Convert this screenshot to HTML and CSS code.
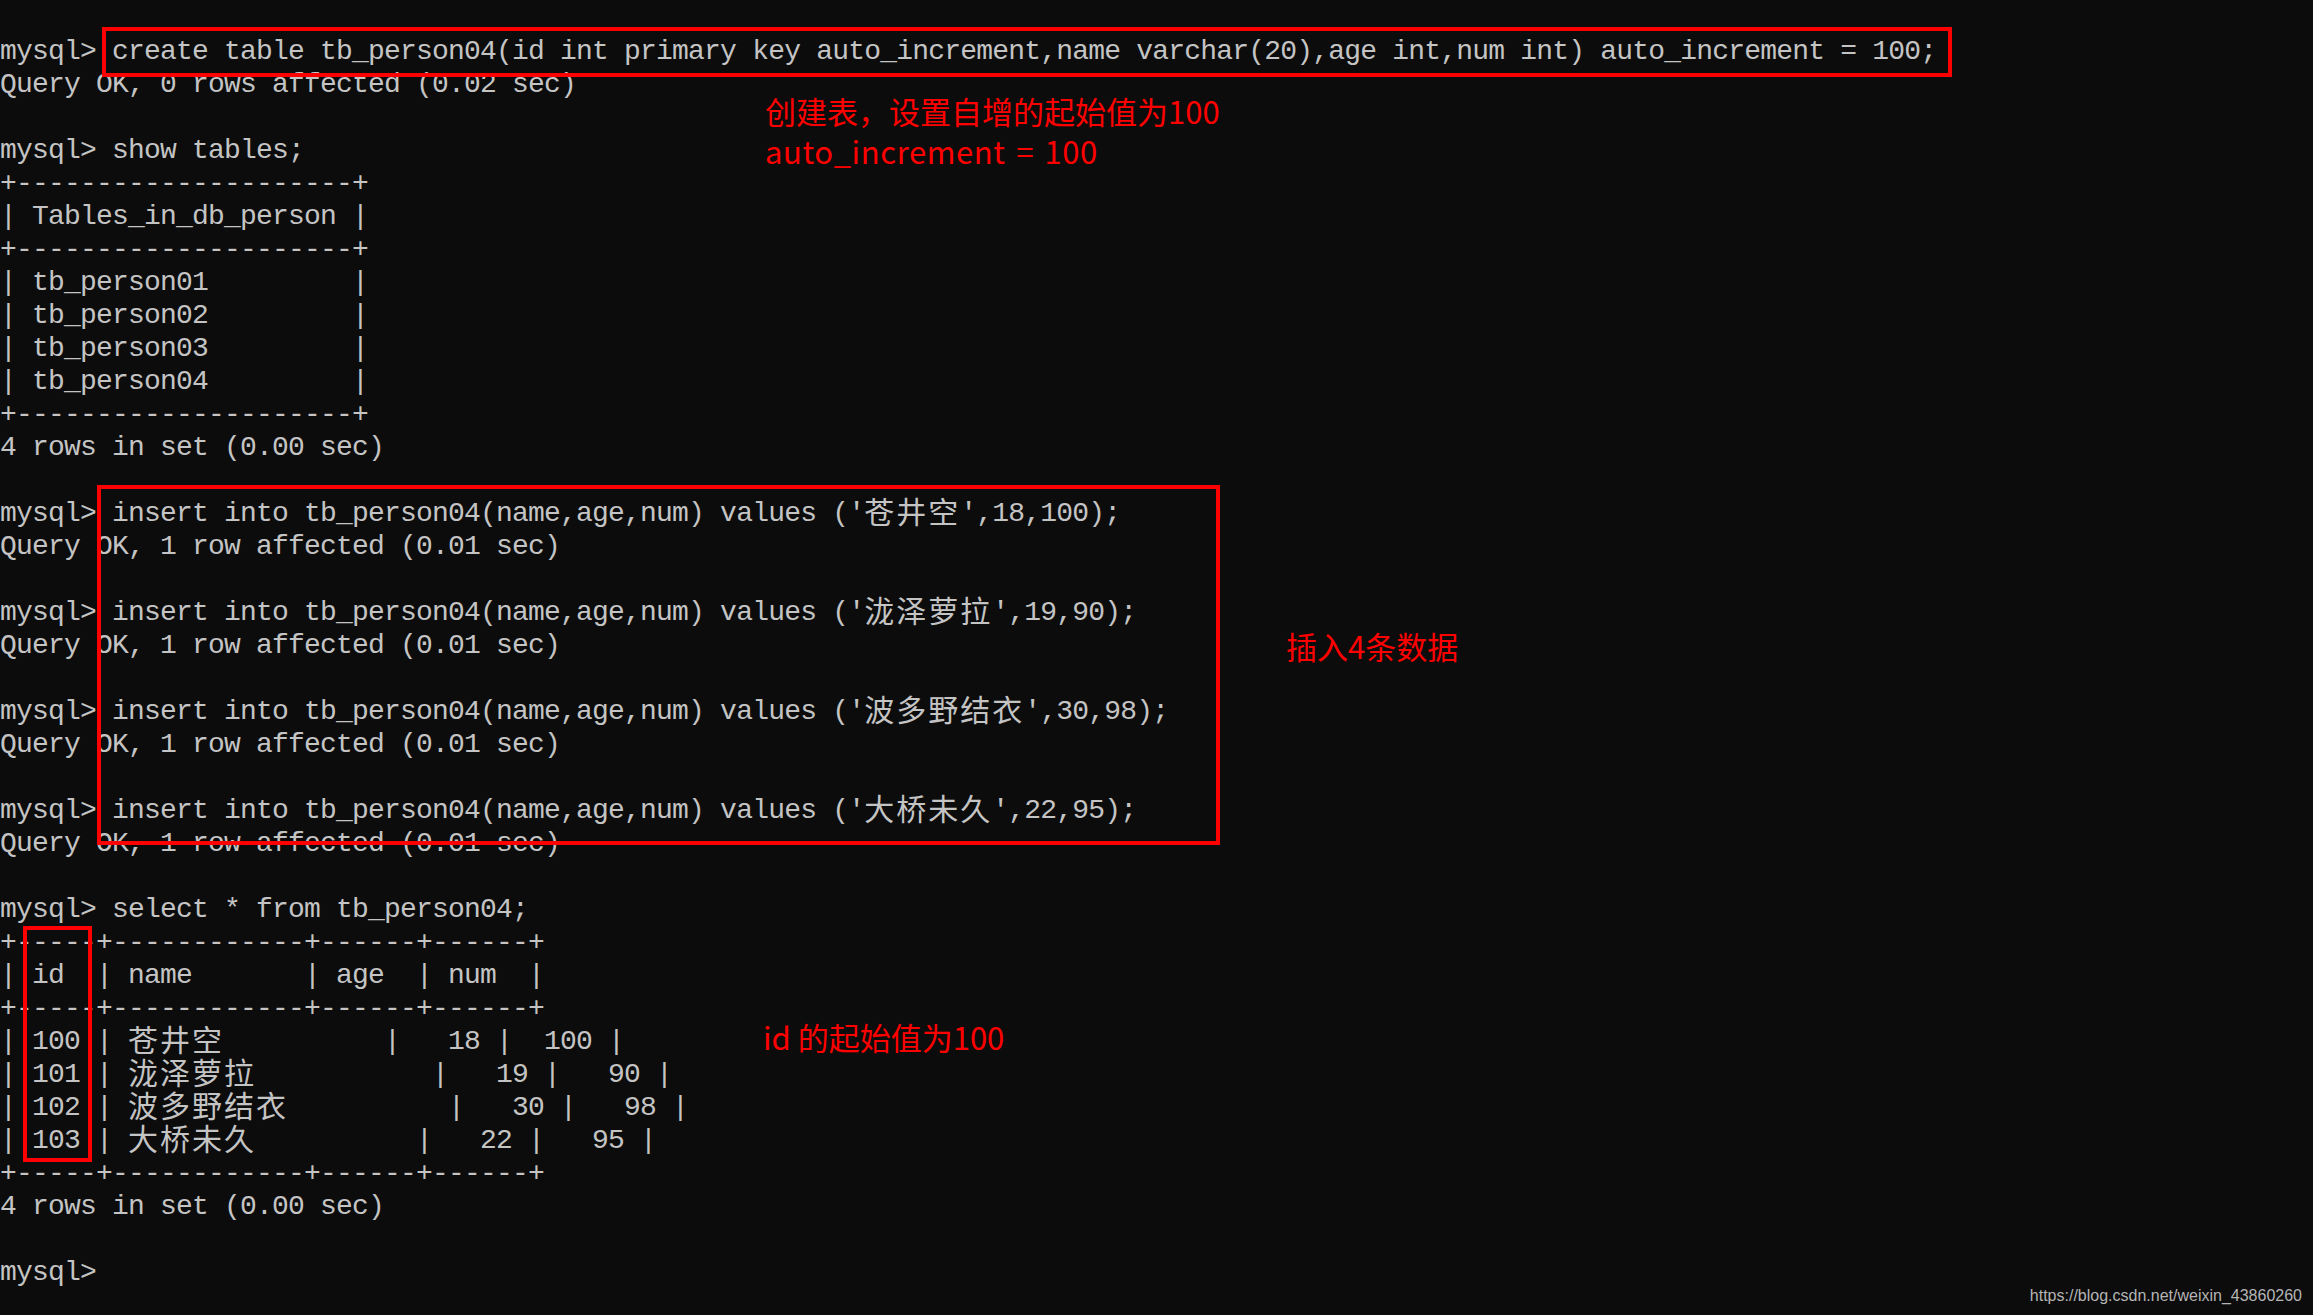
FILE: index.html
```html
<!DOCTYPE html>
<html lang="zh-CN">
<head>
    <meta charset="UTF-8">
    <meta name="viewport" content="width=device-width, initial-scale=1.0">
    <link rel="stylesheet" href="styles.css">
    <title>mysql auto_increment</title>
</head>
<body>
    <div class="screen">
        <div class="log">
            <div class="ln">mysql&gt; create table tb_person04(id int primary key auto_increment,name varchar(20),age int,num int) auto_increment = 100;</div>
            <div class="ln">Query OK, 0 rows affected (0.02 sec)</div>
            <div class="ln"></div>
            <div class="ln">mysql&gt; show tables;</div>
            <div class="ln">+---------------------+</div>
            <div class="ln">| Tables_in_db_person |</div>
            <div class="ln">+---------------------+</div>
            <div class="ln">| tb_person01         |</div>
            <div class="ln">| tb_person02         |</div>
            <div class="ln">| tb_person03         |</div>
            <div class="ln">| tb_person04         |</div>
            <div class="ln">+---------------------+</div>
            <div class="ln">4 rows in set (0.00 sec)</div>
            <div class="ln"></div>
            <div class="ln">mysql&gt; insert into tb_person04(name,age,num) values ('<span class="cj">苍井空</span>',18,100);</div>
            <div class="ln">Query OK, 1 row affected (0.01 sec)</div>
            <div class="ln"></div>
            <div class="ln">mysql&gt; insert into tb_person04(name,age,num) values ('<span class="cj">泷泽萝拉</span>',19,90);</div>
            <div class="ln">Query OK, 1 row affected (0.01 sec)</div>
            <div class="ln"></div>
            <div class="ln">mysql&gt; insert into tb_person04(name,age,num) values ('<span class="cj">波多野结衣</span>',30,98);</div>
            <div class="ln">Query OK, 1 row affected (0.01 sec)</div>
            <div class="ln"></div>
            <div class="ln">mysql&gt; insert into tb_person04(name,age,num) values ('<span class="cj">大桥未久</span>',22,95);</div>
            <div class="ln">Query OK, 1 row affected (0.01 sec)</div>
            <div class="ln"></div>
            <div class="ln">mysql&gt; select * from tb_person04;</div>
            <div class="ln">+-----+------------+------+------+</div>
            <div class="ln">| id  | name       | age  | num  |</div>
            <div class="ln">+-----+------------+------+------+</div>
            <div class="ln">| 100 | <span class="cj">苍井空</span>          |   18 |  100 |</div>
            <div class="ln">| 101 | <span class="cj">泷泽萝拉</span>           |   19 |   90 |</div>
            <div class="ln">| 102 | <span class="cj">波多野结衣</span>          |   30 |   98 |</div>
            <div class="ln">| 103 | <span class="cj">大桥未久</span>          |   22 |   95 |</div>
            <div class="ln">+-----+------------+------+------+</div>
            <div class="ln">4 rows in set (0.00 sec)</div>
            <div class="ln"></div>
            <div class="ln">mysql&gt;</div>
        </div>

        <!-- red marks drawn over the console -->
        <div class="mark mark-create"></div>
        <div class="mark mark-insert"></div>
        <div class="mark mark-id"></div>

        <p class="note note-create">创建表，设置自增的起始值为100</p>
        <p class="note note-auto">auto_increment = 100</p>
        <p class="note note-insert">插入4条数据</p>
        <p class="note note-id">id 的起始值为100</p>

        <div class="wm">https://blog.csdn.net/weixin_43860260</div>
    </div>
</body>
</html>
```

FILE: styles.css
```css
body{
    margin: 0;
    background-color: #0c0c0c;
    overflow: hidden;
}
.screen{
    position: relative;
    width: 2313px;
    height: 1315px;
}

/* console text, one cell = 16px */
.log{
    padding-top: 35px;
    color: #c4c4c4;
    font-family: "Liberation Mono", "DejaVu Sans Mono", monospace;
    font-size: 28px;
    letter-spacing: -0.8px;
}
.ln{
    height: 33px;
    line-height: 33px;
    white-space: pre;
}
.cj{
    font-family: "Noto Sans CJK SC", sans-serif;
    font-size: 30px;
    letter-spacing: 2px;
    line-height: 0;
    vertical-align: -2px;
}

/* red boxes */
.mark{
    position: absolute;
    box-sizing: border-box;
    border: 4px solid #ff0000;
}
.mark-create{
    left: 102px;
    top: 27px;
    width: 1850px;
    height: 50px;
}
.mark-insert{
    left: 97px;
    top: 485px;
    width: 1123px;
    height: 360px;
}
.mark-id{
    left: 23px;
    top: 926px;
    width: 69px;
    height: 236px;
}

/* notes */
.note{
    position: absolute;
    margin: 0;
    color: #ff0000;
    font-family: "Noto Sans CJK SC", sans-serif;
    font-size: 31px;
    line-height: 1;
    white-space: nowrap;
}
.note-create{
    left: 765px;
    top: 95px;
}
.note-auto{
    left: 765px;
    top: 135px;
    letter-spacing: 0.6px;
    word-spacing: 3px;
}
.note-insert{
    left: 1286px;
    top: 630px;
}
.note-id{
    left: 763px;
    top: 1021px;
}

.wm{
    position: absolute;
    right: 11px;
    bottom: 10px;
    color: #b4b4b4;
    font-family: "Liberation Sans", Arial, sans-serif;
    font-size: 16px;
}
```
